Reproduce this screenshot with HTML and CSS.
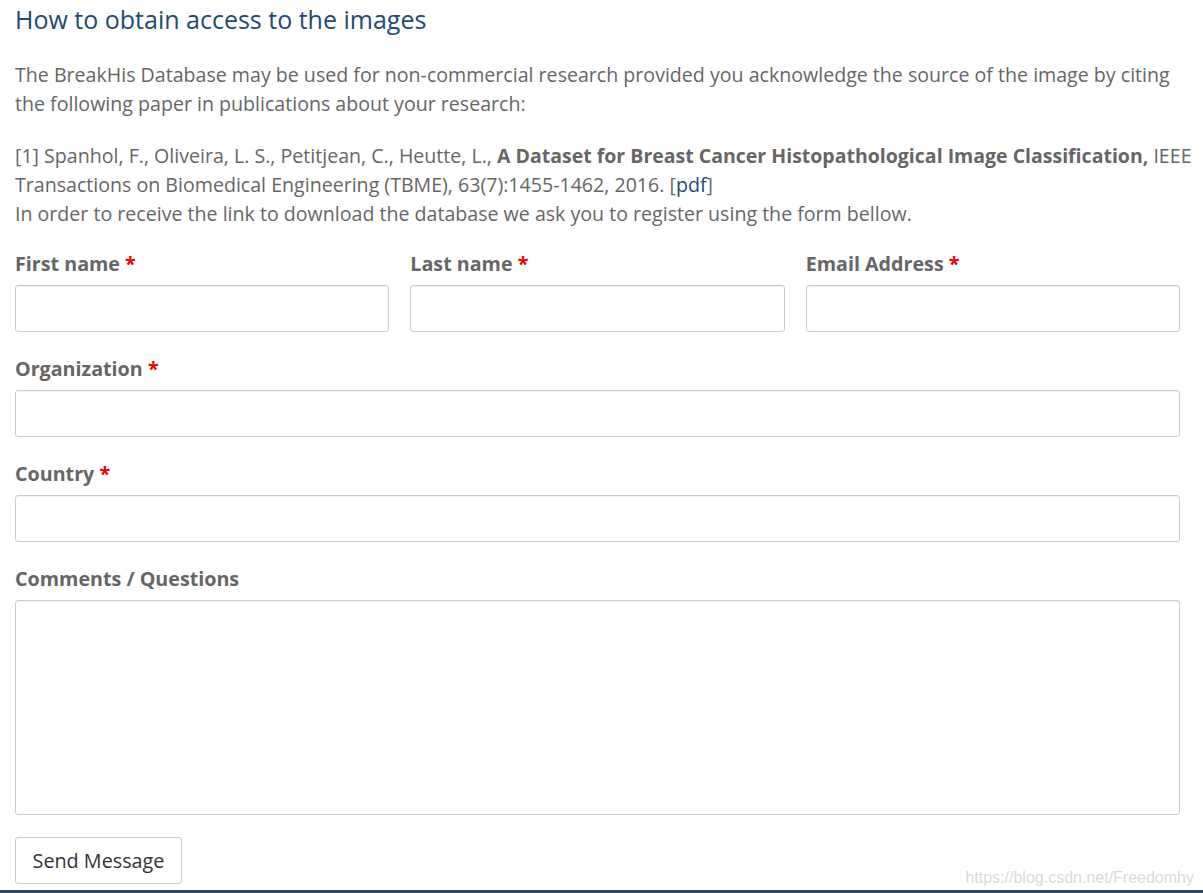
FILE: index.html
```html
<!DOCTYPE html>
<html>
<head>
<meta charset="utf-8">
<link rel="stylesheet" href="styles.css">
</head>
<body>
<div class="page">
  <h2 class="title">How to obtain access to the images</h2>
  <p class="text">The BreakHis Database may be used for non-commercial research provided you acknowledge the source of the image by citing the following paper in publications about your research:</p>
  <p class="text">[1] Spanhol, F., Oliveira, L. S., Petitjean, C., Heutte, L., <strong>A Dataset for Breast Cancer Histopathological Image Classification,</strong> IEEE Transactions on Biomedical Engineering (TBME), 63(7):1455-1462, 2016. [<a class="link" href="#">pdf</a>]<br>In order to receive the link to download the database we ask you to register using the form bellow.</p>
  <form class="form">
    <div class="row">
      <div class="group">
        <label class="label">First name <span class="req">*</span></label>
        <input class="input" type="text">
      </div>
      <div class="group">
        <label class="label">Last name <span class="req">*</span></label>
        <input class="input" type="text">
      </div>
      <div class="group">
        <label class="label">Email Address <span class="req">*</span></label>
        <input class="input" type="text">
      </div>
    </div>
    <div class="group">
      <label class="label">Organization <span class="req">*</span></label>
      <input class="input" type="text">
    </div>
    <div class="group">
      <label class="label">Country <span class="req">*</span></label>
      <input class="input" type="text">
    </div>
    <div class="group">
      <label class="label">Comments / Questions</label>
      <textarea class="input area"></textarea>
    </div>
    <button class="btn" type="button">Send Message</button>
  </form>
</div>
<div class="watermark">https://blog.csdn.net/Freedomhy</div>
<div class="bottombar"></div>
</body>
</html>
```

FILE: styles.css
```css
html, body {
  margin: 0;
  padding: 0;
  background: #fff;
  height: 100%;
}
body {
  font-family: "Open Sans", sans-serif;
  color: #666;
  position: relative;
  overflow: hidden;
}
.page {
  padding: 0 23px 0 15px;
}
.title {
  margin: 0;
  padding-top: 3px;
  font-size: 25px;
  font-weight: 400;
  line-height: 32px;
  color: #1f4a73;
}
.text {
  font-size: 19.6px;
  line-height: 29px;
  margin: 25px -23px 0 0;
}
.text + .text {
  margin-top: 23px;
}
.text strong {
  font-weight: 700;
  font-size: 19.5px;
  color: #666;
}
.link {
  color: #1f4a73;
  text-decoration: none;
}
.form {
  margin-top: 22px;
}
.row {
  display: grid;
  grid-template-columns: 1fr 1fr 1fr;
  column-gap: 21px;
}
.group {
  display: flex;
  flex-direction: column;
  margin-bottom: 23px;
}
.label {
  font-size: 19.7px;
  font-weight: 700;
  line-height: 28px;
  margin-bottom: 7px;
  color: #666;
}
.req {
  color: #e00;
}
.input {
  box-sizing: border-box;
  height: 47px;
  border: 1px solid #ccc;
  border-radius: 3px;
  background: #fff;
  box-shadow: inset 0 1px 1px rgba(0,0,0,0.06);
  font-family: "Open Sans", sans-serif;
  font-size: 18px;
  margin: 0;
  padding: 6px 12px;
}
.area {
  height: 215px;
  resize: none;
}
.btn {
  margin-top: -1px;
  box-sizing: border-box;
  width: 167px;
  height: 47px;
  background: #fff;
  border: 1px solid #ccc;
  border-radius: 3px;
  font-family: "Open Sans", sans-serif;
  font-size: 19.8px;
  color: #333;
  padding: 0;
}
.watermark {
  position: absolute;
  right: 9px;
  bottom: 6px;
  font-family: "Liberation Sans", Arial, sans-serif;
  font-size: 16px;
  color: rgba(200,200,200,0.7);
}
.bottombar {
  position: absolute;
  left: 0;
  right: 0;
  bottom: 0;
  height: 3px;
  background: #2c4a63;
}
```
